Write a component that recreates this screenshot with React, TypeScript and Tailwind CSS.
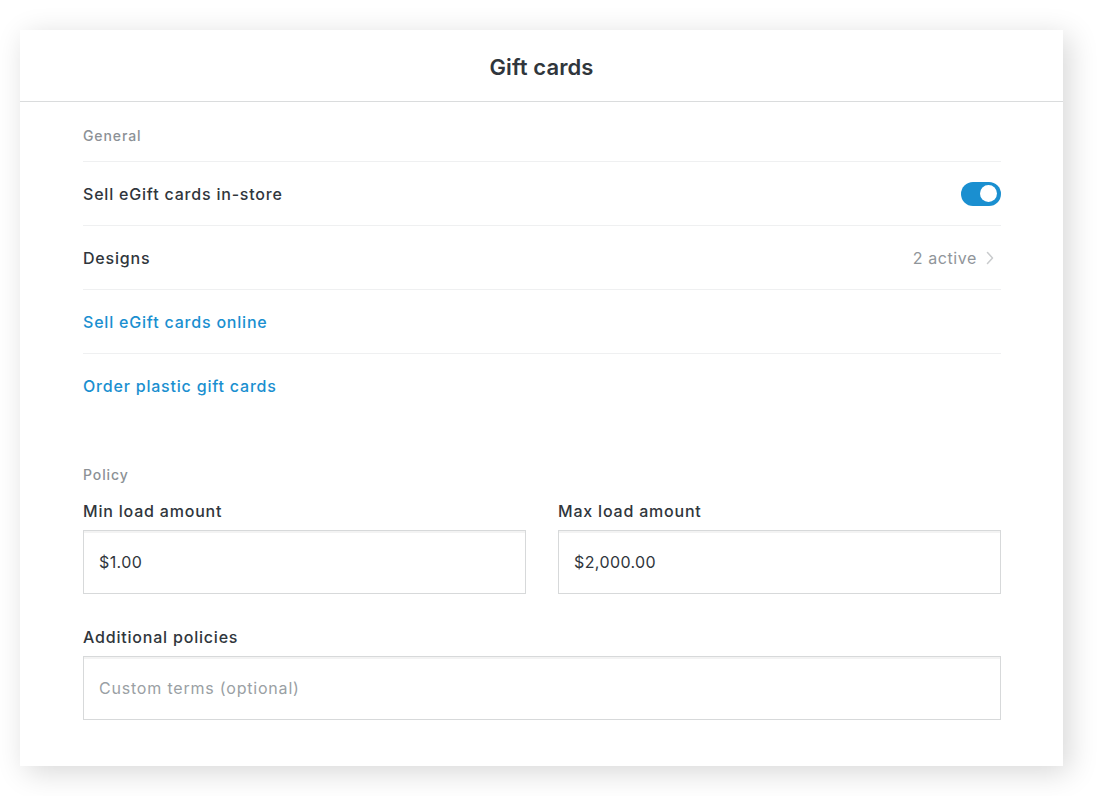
import React from "react";

export default function App() {
  const font = { fontFamily: "Inter, 'Noto Sans', 'Liberation Sans', sans-serif" };
  return (
    <div className="min-h-[796px] w-[1103px] bg-white pt-[30px] pl-[20px]" style={font}>
      <div className="w-[1043px] h-[736px] bg-white shadow-[6px_6px_28px_rgba(0,0,0,0.16)] flex flex-col">
        <div className="h-[72px] border-b border-[#dadcdd] flex items-center justify-center">
          <h1 className="text-[22px] font-semibold text-[#30363c] tracking-[0.1px] pt-[4px]">Gift cards</h1>
        </div>
        <div className="pl-[63px] pr-[62px] pt-[24px] flex flex-col">
          <div className="text-[14px] leading-[20px] text-[#8c9196] font-medium tracking-[0.9px]">General</div>
          <div className="mt-[15px] flex flex-col">
            <div className="h-[64px] border-t border-[#eff0f1] flex items-center justify-between">
              <span className="text-[16px] font-medium text-[#30363c] tracking-[0.8px]">Sell eGift cards in-store</span>
              <div className="w-[40px] h-[24px] rounded-full bg-[#1a8fd0] flex items-center justify-end pr-[4px]">
                <div className="w-[17px] h-[17px] rounded-full bg-white" />
              </div>
            </div>
            <div className="h-[64px] border-t border-[#eff0f1] flex items-center justify-between">
              <span className="text-[16px] font-medium text-[#30363c] tracking-[0.8px]">Designs</span>
              <div className="flex items-center gap-[9px] pr-[7px]">
                <span className="text-[16px] text-[#90959a] tracking-[0.6px]">2 active</span>
                <svg width="8" height="14" viewBox="0 0 8 14" fill="none">
                  <path d="M1.5 1.5L6.5 7L1.5 12.5" stroke="#c9cbcd" strokeWidth="1.5" strokeLinecap="round" strokeLinejoin="round" />
                </svg>
              </div>
            </div>
            <div className="h-[64px] border-t border-[#eff0f1] flex items-center">
              <span className="text-[16px] font-medium text-[#1a8fd0] tracking-[0.8px]">Sell eGift cards online</span>
            </div>
            <div className="h-[64px] border-t border-[#eff0f1] flex items-center">
              <span className="text-[16px] font-medium text-[#1a8fd0] tracking-[0.8px]">Order plastic gift cards</span>
            </div>
          </div>
          <div className="mt-[48px] text-[14px] leading-[20px] text-[#8c9196] font-medium tracking-[0.9px]">Policy</div>
          <div className="mt-[14px] grid grid-cols-2 gap-x-[32px]">
            <div className="flex flex-col">
              <label className="text-[16px] leading-[24px] font-medium text-[#30363c] tracking-[0.8px]">Min load amount</label>
              <div className="mt-[7px] h-[64px] border border-[#d7d9da] shadow-[inset_0_2px_0_#f3f3f3] flex items-center pl-[15px] text-[16px] text-[#30363c] tracking-[0.4px]">
                $1.00
              </div>
            </div>
            <div className="flex flex-col">
              <label className="text-[16px] leading-[24px] font-medium text-[#30363c] tracking-[0.8px]">Max load amount</label>
              <div className="mt-[7px] h-[64px] border border-[#d7d9da] shadow-[inset_0_2px_0_#f3f3f3] flex items-center pl-[15px] text-[16px] text-[#30363c] tracking-[0.4px]">
                $2,000.00
              </div>
            </div>
          </div>
          <label className="mt-[31px] text-[16px] leading-[24px] font-medium text-[#30363c] tracking-[0.8px]">Additional policies</label>
          <div className="mt-[7px] h-[64px] border border-[#d7d9da] shadow-[inset_0_2px_0_#f3f3f3] flex items-center pl-[15px] text-[16px] text-[#9a9fa4] tracking-[0.8px]">
            Custom terms (optional)
          </div>
        </div>
      </div>
    </div>
  );
}
